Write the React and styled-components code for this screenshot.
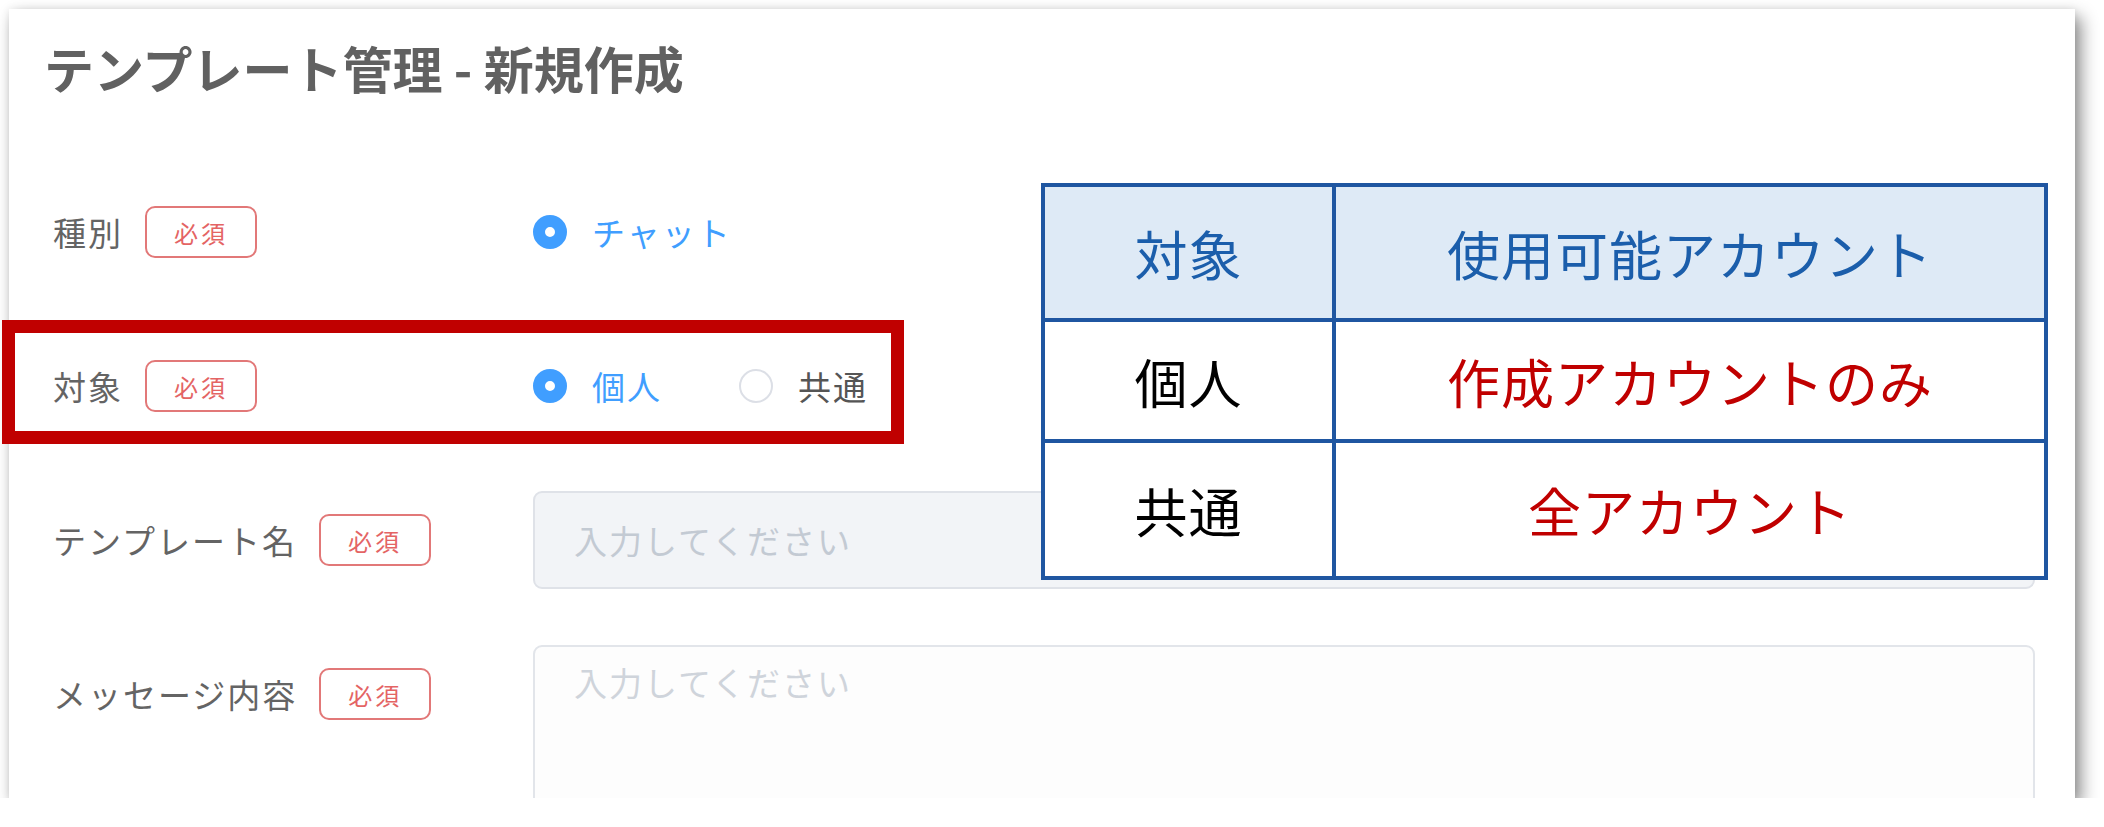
import styled, { createGlobalStyle } from "styled-components";

const GlobalStyle = createGlobalStyle`
  body {
    margin: 0;
    background: #fff;
    font-family: "Noto Sans CJK JP", "Noto Sans", sans-serif;
  }
`;

const rows = [
  { target: "個人", scope: "作成アカウントのみ" },
  { target: "共通", scope: "全アカウント" },
];

const App = () => {
  return (
    <Page>
      <GlobalStyle />
      <Card>
        <Title>テンプレート管理 - 新規作成</Title>
        <Form>
          <FormItem>
            <LabelWrap>
              <LabelText>種別</LabelText>
              <Required>必須</Required>
            </LabelWrap>
            <Field>
              <RadioGroup>
                <Radio>
                  <Dot $checked />
                  <RadioText $checked>チャット</RadioText>
                </Radio>
              </RadioGroup>
            </Field>
          </FormItem>
          <FormItem>
            <LabelWrap>
              <LabelText>対象</LabelText>
              <Required>必須</Required>
            </LabelWrap>
            <Field>
              <RadioGroup>
                <Radio>
                  <Dot $checked />
                  <RadioText $checked>個人</RadioText>
                </Radio>
                <Radio>
                  <Dot />
                  <RadioText>共通</RadioText>
                </Radio>
              </RadioGroup>
            </Field>
          </FormItem>
          <FormItem>
            <LabelWrap>
              <LabelText>テンプレート名</LabelText>
              <Required>必須</Required>
            </LabelWrap>
            <Field>
              <TextInput placeholder="入力してください" />
            </Field>
          </FormItem>
          <FormItem $top>
            <LabelWrap>
              <LabelText>メッセージ内容</LabelText>
              <Required>必須</Required>
            </LabelWrap>
            <Field>
              <TextArea placeholder="入力してください" />
            </Field>
          </FormItem>
        </Form>

        <ScopeTable>
          <colgroup>
            <col style={{ width: 291 }} />
            <col />
          </colgroup>
          <thead>
            <tr>
              <Th>対象</Th>
              <Th>使用可能アカウント</Th>
            </tr>
          </thead>
          <tbody>
            {rows.map((r, i) => (
              <BodyRow key={r.target} $tall={i === 1}>
                <Td>{r.target}</Td>
                <Td $red>{r.scope}</Td>
              </BodyRow>
            ))}
          </tbody>
        </ScopeTable>
      </Card>
      <Highlight />
    </Page>
  );
};

export default App;

const Page = styled.div`
  position: relative;
  padding: 9px 0 0 9px;
`;

const Card = styled.div`
  position: relative;
  width: 2066px;
  height: 789px;
  box-sizing: border-box;
  padding: 33px 40px 0 44px;
  background: #fff;
  overflow: hidden;
  box-shadow: 6px 8px 16px rgba(0, 0, 0, 0.45), 0 0 8px rgba(0, 0, 0, 0.08);
`;

const Title = styled.h1`
  margin: 0 0 0 -9px;
  font-size: 50px;
  line-height: 1;
  font-weight: 700;
  color: #616161;
`;

const Form = styled.div`
  margin-top: 91px;
  display: flex;
  flex-direction: column;
  gap: 56px;
`;

const FormItem = styled.div`
  display: flex;
  align-items: ${(p) => (p.$top ? "flex-start" : "center")};
  min-height: 98px;
`;

const LabelWrap = styled.div`
  width: 480px;
  height: 98px;
  flex-shrink: 0;
  display: flex;
  align-items: center;
  gap: 22px;
`;

const LabelText = styled.span`
  font-size: 33px;
  letter-spacing: 2px;
  color: #646464;
`;

const Required = styled.span`
  display: inline-flex;
  align-items: center;
  justify-content: center;
  width: 112px;
  height: 52px;
  box-sizing: border-box;
  border: 2px solid #e27878;
  border-radius: 10px;
  font-size: 24px;
  letter-spacing: 3px;
  color: #e46464;
`;

const Field = styled.div`
  flex: 1;
  display: flex;
  align-items: center;
`;

const RadioGroup = styled.div`
  display: flex;
  align-items: center;
  gap: 77px;
`;

const Radio = styled.label`
  display: flex;
  align-items: center;
  gap: 25px;
`;

const Dot = styled.span`
  width: 34px;
  height: 34px;
  box-sizing: border-box;
  border-radius: 50%;
  border: ${(p) => (p.$checked ? "12px solid #409eff" : "2px solid #dcdfe6")};
  background: #fff;
`;

const RadioText = styled.span`
  font-size: 33px;
  letter-spacing: 2px;
  color: ${(p) => (p.$checked ? "#409eff" : "#555")};
`;

const TextInput = styled.input`
  width: 100%;
  height: 98px;
  box-sizing: border-box;
  padding: 0 39px;
  border: 2px solid #dfe2e8;
  border-radius: 9px;
  background: #f2f4f7;
  font-family: inherit;
  font-size: 33px;
  letter-spacing: 2px;
  outline: none;

  &::placeholder {
    color: #c3cad3;
  }
`;

const TextArea = styled.textarea`
  width: 100%;
  height: 260px;
  box-sizing: border-box;
  padding: 15px 39px;
  border: 2px solid #e2e5ea;
  border-radius: 9px;
  background: #fdfdfd;
  font-family: inherit;
  font-size: 33px;
  line-height: 40px;
  letter-spacing: 2px;
  resize: none;
  outline: none;

  &::placeholder {
    color: #cfd4db;
  }
`;

const ScopeTable = styled.table`
  position: absolute;
  left: 1032px;
  top: 174px;
  width: 1007px;
  border-collapse: collapse;
  background: #fff;
  table-layout: fixed;
  font-family: "Noto Sans CJK JP", "Noto Sans", sans-serif;
`;

const Th = styled.th`
  height: 131px;
  border: 4px solid #1f56a1;
  background: #deeaf6;
  color: #1b5eab;
  font-size: 53px;
  font-weight: 400;
  letter-spacing: 1px;
  text-align: center;
  padding: 0;
`;

const BodyRow = styled.tr`
  height: ${(p) => (p.$tall ? "137px" : "121px")};
`;

const Td = styled.td`
  border: 4px solid #1f56a1;
  color: ${(p) => (p.$red ? "#c00000" : "#000")};
  font-size: 53px;
  letter-spacing: 1px;
  text-align: center;
  padding: 0;
`;

const Highlight = styled.div`
  position: absolute;
  left: 2px;
  top: 320px;
  width: 902px;
  height: 124px;
  box-sizing: border-box;
  border: 13px solid #c00000;
  pointer-events: none;
`;
